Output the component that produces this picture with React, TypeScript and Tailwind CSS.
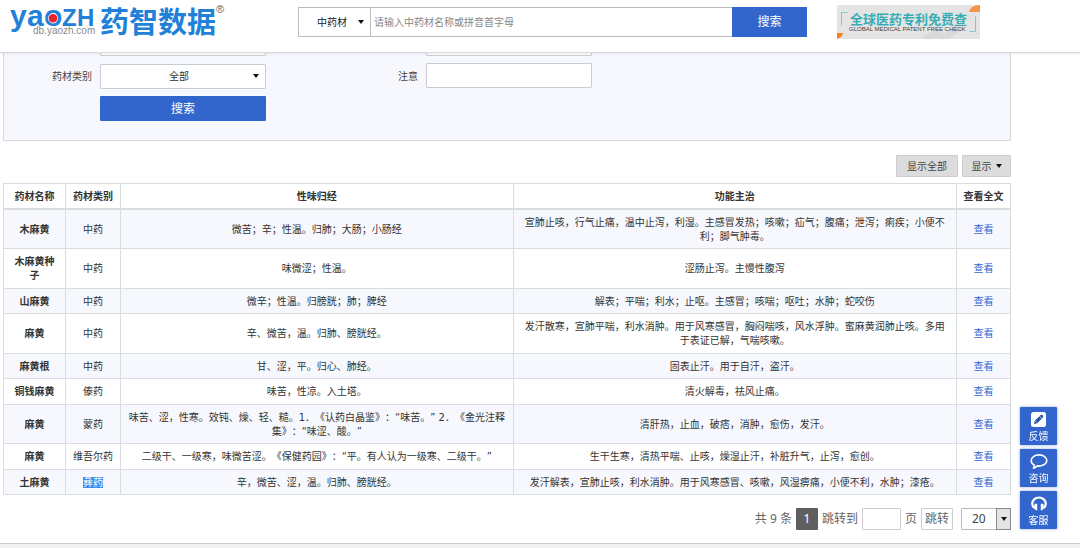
import React from "react";

type Herb = {
  name: string;
  category: string;
  nature: string;
  effect: string;
  selected?: boolean;
};

const herbs: Herb[] = [
  {
    name: "木麻黄",
    category: "中药",
    nature: "微苦；辛；性温。归肺；大肠；小肠经",
    effect: "宣肺止咳，行气止痛，温中止泻，利湿。主感冒发热；咳嗽；疝气；腹痛；泄泻；痢疾；小便不利；脚气肿毒。",
  },
  { name: "木麻黄种子", category: "中药", nature: "味微涩；性温。", effect: "涩肠止泻。主慢性腹泻" },
  {
    name: "山麻黄",
    category: "中药",
    nature: "微辛；性温。归膀胱；肺；脾经",
    effect: "解表；平喘；利水；止呕。主感冒；咳喘；呕吐；水肿；蛇咬伤",
  },
  {
    name: "麻黄",
    category: "中药",
    nature: "辛、微苦，温。归肺、膀胱经。",
    effect: "发汗散寒，宣肺平喘，利水消肿。用于风寒感冒，胸闷喘咳，风水浮肿。蜜麻黄润肺止咳。多用于表证已解，气喘咳嗽。",
  },
  { name: "麻黄根", category: "中药", nature: "甘、涩，平。归心、肺经。", effect: "固表止汗。用于自汗，盗汗。" },
  { name: "铜钱麻黄", category: "傣药", nature: "味苦，性凉。入土塔。", effect: "清火解毒，祛风止痛。" },
  {
    name: "麻黄",
    category: "蒙药",
    nature: "味苦、涩，性寒。效钝、燥、轻、糙。1．《认药白晶鉴》：“味苦。” 2．《金光注释集》：“味涩、酸。”",
    effect: "清肝热，止血，破痞，消肿，愈伤，发汗。",
  },
  {
    name: "麻黄",
    category: "维吾尔药",
    nature: "二级干、一级寒，味微苦涩。《保健药园》：“平。有人认为一级寒、二级干。”",
    effect: "生干生寒，清热平喘、止咳，燥湿止汗，补脏升气，止泻，愈创。",
  },
  {
    name: "土麻黄",
    category: "彝药",
    nature: "辛，微苦、涩，温。归肺、膀胱经。",
    effect: "发汗解表，宣肺止咳，利水消肿。用于风寒感冒、咳嗽，风湿痹痛，小便不利，水肿；漆疮。",
    selected: true,
  },
];

const fieldClass = "h-[25px] w-[166px] rounded-[1px] border border-[#c9ccd0] bg-white text-[10px] text-[#333]";

function Caret({ className = "" }: { className?: string }) {
  return (
    <svg className={className} width="6" height="4" viewBox="0 0 6 4" aria-hidden="true">
      <path d="M0 0h6L3 4z" fill="#111" />
    </svg>
  );
}

function Logo() {
  return (
    <svg width="218" height="46" viewBox="0 0 218 46" className="overflow-visible" role="img" aria-label="药智数据">
      <g fill="#2180d8" fontFamily="'Liberation Sans', sans-serif" fontWeight="700">
        <text x="0" y="24" fontSize="30">y</text>
        <text x="17" y="24" fontSize="30">a</text>
        <text x="34" y="24" fontSize="30">o</text>
        <text x="52" y="24" fontSize="24">Z</text>
        <text x="67" y="24" fontSize="24">H</text>
      </g>
      <circle cx="43" cy="16.300" r="4.700" fill="#e8222a" stroke="#fff" strokeWidth=".8" />
      <text x="23" y="32" fontSize="10" fill="#8a8a8a" fontFamily="'Liberation Sans', sans-serif">
        db.yaozh.com
      </text>
      <text x="90" y="31" fontSize="29" fontWeight="700" fill="#2180d8" fontFamily="'Noto Sans CJK SC', sans-serif">
        药智数据
      </text>
      <text x="206" y="11" fontSize="11" fill="#666" fontFamily="'Liberation Sans', sans-serif">
        ®
      </text>
    </svg>
  );
}

function Banner() {
  return (
    <svg width="143" height="34" viewBox="0 0 143 34" role="img" aria-label="全球医药专利免费查">
      <rect width="143" height="34" fill="#e4e4e4" />
      <path d="M84 34 99 23l8 6 12-9 8 4-16 10z" fill="#d9d9d9" />
      <path d="M132 7c1-4 4-7 11-7v7z" fill="#f6954a" />
      <path d="M0 28h6.500L4 32l-4 2z" fill="#f58220" />
      <path d="M10.500 7.500h-6v13M132.500 26.500h6v-15" fill="none" stroke="#7cc9cf" />
      <text x="13" y="19" fontSize="13" fontWeight="700" fill="#35adb5" fontFamily="'Noto Sans CJK SC', sans-serif">
        全球医药专利免费查
      </text>
      <text x="12" y="26" fontSize="6" fill="#444" fontFamily="'Liberation Sans', sans-serif">
        GLOBAL MEDICAL PATENT FREE CHECK
      </text>
    </svg>
  );
}

function Header() {
  return (
    <header className="relative z-10 flex h-[53px] items-start border-b border-[#d9dcdf] bg-white pl-[10px] shadow-[0_1px_2px_rgba(0,0,0,0.08)]">
      <a href="#home" className="mt-[2px] w-[288px] shrink-0">
        <Logo />
      </a>
      <form className="mt-[7px] flex h-[30px] w-[509px] shrink-0" onSubmit={(e) => e.preventDefault()}>
        <div className="relative">
          <select
            aria-label="数据库"
            className="h-full w-[72px] appearance-none border border-r-0 border-[#bbb] bg-white pl-[18px] text-[10px] text-[#222]"
          >
            <option>中药材</option>
          </select>
          <Caret className="pointer-events-none absolute top-[13px] right-[6px]" />
        </div>
        <input
          type="text"
          aria-label="关键词"
          placeholder="请输入中药材名称或拼音首字母"
          className="min-w-0 flex-1 border border-r-0 border-[#bbb] bg-white px-[3px] text-[10px] placeholder:text-[#888]"
        />
        <button className="w-[75px] bg-[#3366cc] text-[12px] text-white">搜索</button>
      </form>
      <a href="#patent" className="mt-[5px] ml-[30px] shrink-0">
        <Banner />
      </a>
    </header>
  );
}

function FilterPanel() {
  return (
    <form
      className="-mt-[23px] grid grid-cols-[88px_166px_144px_166px] gap-x-2 gap-y-[7px] border border-[#d8dbde] bg-[#f7f8fd] pb-[19px]"
      onSubmit={(e) => e.preventDefault()}
    >
      <input aria-label="药材名称" className={`col-start-2 ${fieldClass}`} />
      <input aria-label="功能主治" className={`col-start-4 ${fieldClass}`} />
      <label htmlFor="category" className="self-center text-right text-[10px] text-[#444]">
        药材类别
      </label>
      <div className="relative">
        <select id="category" className={`appearance-none pr-[8px] [text-align-last:center] ${fieldClass}`}>
          <option>全部</option>
        </select>
        <Caret className="pointer-events-none absolute top-[11px] right-[7px]" />
      </div>
      <label htmlFor="notes" className="self-center text-right text-[10px] text-[#444]">
        注意
      </label>
      <input id="notes" className={fieldClass} />
      <button className="col-start-2 h-[25px] rounded-[1px] bg-[#3366cc] text-[12px] text-white">搜索</button>
    </form>
  );
}

const cell = "border border-[#dadddf] px-[7px] text-center";

function HerbTable() {
  return (
    <table className="mt-[6px] w-full table-fixed border-collapse text-[10px] leading-[14px] text-[#333] [text-spacing-trim:space-all]">
      <colgroup>
        <col className="w-[62px]" />
        <col className="w-[55px]" />
        <col className="w-[39%]" />
        <col />
        <col className="w-[54px]" />
      </colgroup>
      <thead>
        <tr className="h-[25px]">
          {["药材名称", "药材类别", "性味归经", "功能主治", "查看全文"].map((h) => (
            <th key={h} className="border border-b-2 border-[#dadddf] pt-[2px] font-bold whitespace-nowrap">
              {h}
            </th>
          ))}
        </tr>
      </thead>
      <tbody>
        {herbs.map((h, i) => (
          <tr key={i} className="odd:bg-[#f7f8fd] [&>*]:pt-[6px] [&>*]:pb-[4px] even:[&>*]:pb-[5px]">
            <th className={`${cell} font-bold`}>{h.name}</th>
            <td className="border border-[#dadddf] text-center">
              {h.selected ? <span className="bg-[#3390f0] text-white">{h.category}</span> : h.category}
            </td>
            <td className={cell}>{h.nature}</td>
            <td className={cell}>{h.effect}</td>
            <td className={cell}>
              <a href="#detail" className="text-[#3366cc]">
                查看
              </a>
            </td>
          </tr>
        ))}
      </tbody>
    </table>
  );
}

function Pagination() {
  return (
    <nav className="mt-[13px] flex h-[22px] items-center justify-end gap-1 font-['Noto_Sans','Noto_Sans_CJK_SC',sans-serif] text-[12px] leading-[20px] text-[#666]">
      <span>共 9 条</span>
      <button aria-current="page" className="h-[22px] w-[22px] rounded-[1px] bg-[#5f5f5f] text-white">
        1
      </button>
      <label htmlFor="page">跳转到</label>
      <input id="page" className="h-[22px] w-[39px] rounded-[1px] border border-[#ccc] bg-white" />
      <span>页</span>
      <button className="h-[22px] w-[32px] rounded-[1px] border border-[#ccc] bg-white">跳转</button>
      <div className="relative ml-1">
        <select
          aria-label="每页条数"
          className="h-[22px] w-[50px] appearance-none rounded-[1px] border border-[#bbb] bg-white pl-[10px] text-[#444]"
        >
          <option>20</option>
        </select>
        <span className="pointer-events-none absolute top-0 right-0 flex h-[22px] w-[15px] items-center justify-center border border-[#888] bg-[#e4e4e4]">
          <Caret />
        </span>
      </div>
    </nav>
  );
}

function PencilIcon() {
  return (
    <svg width="15" height="15" viewBox="0 0 15 15" aria-hidden="true">
      <rect width="15" height="15" rx="2.500" fill="#fff" />
      <path d="M3 12l.8-3.300 5.700-5.500a1.600 1.600 0 0 1 2.300 2.300L6.200 11.200z" fill="#274f9f" />
      <path d="M8.600 4.200l2.200 2.200M4.600 9.200l1.200 1.200" stroke="#fff" strokeWidth=".8" />
    </svg>
  );
}

function BubbleIcon() {
  return (
    <svg width="18" height="15" viewBox="0 0 18 15" fill="none" stroke="#fff" strokeWidth="1.600" aria-hidden="true">
      <path
        d="M9 .9C4.600.9 1.200 3.400 1.200 6.500c0 2.100 1.300 3.900 3.300 4.800 0 1.200-.4 2-1.100 2.800 1.800-.2 3-1 3.800-2.200.6.100 1.200.2 1.800.2 4.400 0 7.800-2.500 7.800-5.600S13.400.9 9 .9z"
        strokeLinejoin="round"
      />
    </svg>
  );
}

function HeadphoneIcon() {
  return (
    <svg width="16" height="15" viewBox="0 0 16 15" aria-hidden="true">
      <path d="M3.500 12C1.800 10.700 1.200 9.200 1.200 7.800a6.800 6.300 0 0 1 13.600 0c0 1.400-.6 2.900-2.300 4.200" fill="none" stroke="#fff" strokeWidth="2.200" />
      <path d="M3.600 7.800h2.600v6.400H5L3 12.600zM12.400 7.800H9.800v6.400H11l2-1.600z" fill="#fff" />
    </svg>
  );
}

function SideTools() {
  const tools = [
    { label: "反馈", icon: <PencilIcon /> },
    { label: "咨询", icon: <BubbleIcon /> },
    { label: "客服", icon: <HeadphoneIcon /> },
  ];
  return (
    <aside className="fixed right-[23px] bottom-[19px] flex flex-col gap-1">
      {tools.map((t) => (
        <button
          key={t.label}
          className="flex h-[38px] w-[37px] flex-col items-center gap-1 rounded-[1px] bg-[#3366cc] pt-[5px] text-[10px] leading-[12px] text-white shadow-[0_0_3px_rgba(51,102,204,0.6)]"
        >
          {t.icon}
          {t.label}
        </button>
      ))}
    </aside>
  );
}

export default function App() {
  return (
    <div className="flex min-h-screen flex-col overflow-hidden bg-white font-['DejaVu_Sans','Noto_Sans_CJK_SC',sans-serif]">
      <Header />
      <main className="mr-[69px] ml-[3px]">
        <FilterPanel />
        <div className="mt-[14px] flex justify-end gap-1 text-[10px] text-[#444]">
          <button className="h-[22px] w-[62px] rounded-[1px] border border-[#ccc] bg-[#dcdcdc]">显示全部</button>
          <button className="flex h-[22px] w-[49px] items-center justify-center gap-1 rounded-[1px] border border-[#ccc] bg-[#dcdcdc]">
            显示
            <Caret />
          </button>
        </div>
        <HerbTable />
        <Pagination />
      </main>
      <footer className="mt-[13px] flex-1 border-t border-[#ccc] bg-[#f1f1f1]" />
      <SideTools />
    </div>
  );
}
